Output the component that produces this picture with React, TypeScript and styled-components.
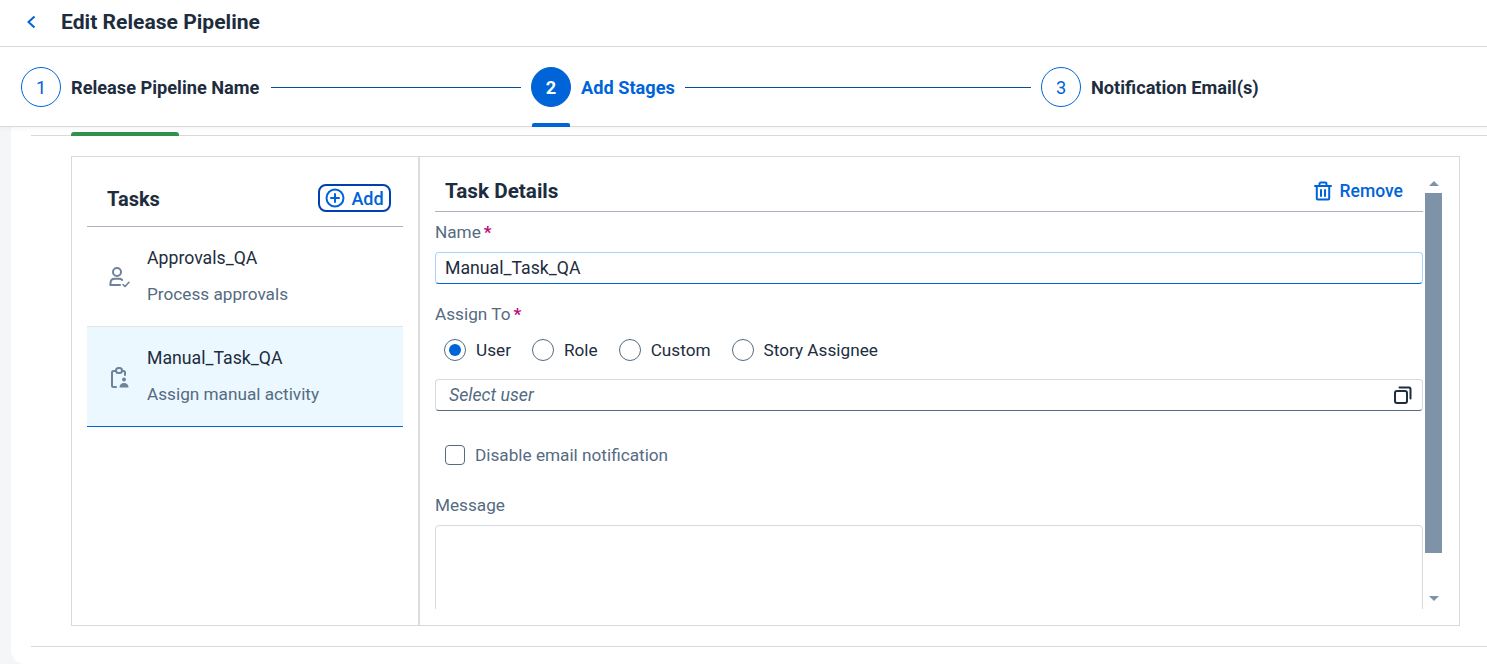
import { createGlobalStyle, styled } from 'styled-components';

const GlobalStyle = createGlobalStyle`
  html, body { margin: 0; padding: 0; height: 100%; background: #f5f6f7; overflow: hidden; }
  * { box-sizing: border-box; }
  body { font-family: Roboto, 'Liberation Sans', sans-serif; color: #1d2d3e; }
`;

const Page = styled.div`
  width: 1487px;
  height: 664px;
  display: flex;
  flex-direction: column;
  overflow: hidden;
`;

const TopBar = styled.header`
  height: 47px;
  flex: none;
  display: flex;
  align-items: center;
  gap: 23px;
  padding: 0 0 3px 25px;
  background: #fff;
  border-bottom: 1px solid #d9d9d9;
  h1 {
    margin: 0;
    font-size: 21.1px;
    line-height: 24px;
    font-weight: 700;
  }
`;

const BackIcon = styled.svg`
  width: 13px;
  height: 14px;
  fill: none;
  stroke: #0064d9;
  stroke-width: 2;
`;

const Stepper = styled.nav`
  height: 80px;
  flex: none;
  display: flex;
  align-items: flex-start;
  padding: 20px 0 0 21px;
  background: #fff;
  border-bottom: 1px solid #d9d9d9;
  box-shadow: 0 2px 5px rgba(0, 0, 0, 0.04);
  position: relative;
  z-index: 2;
`;

const Step = styled.div<{ $active?: boolean; $width: number }>`
  position: relative;
  display: flex;
  align-items: center;
  gap: 10px;
  width: ${(p) => p.$width}px;
  height: 40px;
  white-space: nowrap;
  font-size: 18.2px;
  font-weight: 700;
  color: ${(p) => (p.$active ? '#0064d9' : '#1d2d3e')};
  margin-right: 10px;
  ${(p) =>
    p.$active &&
    `&::after {
      content: '';
      position: absolute;
      left: 1px;
      top: 56px;
      width: 38px;
      height: 4px;
      background: #0064d9;
      border-radius: 2px 2px 0 0;
    }`}
`;

const StepNumber = styled.span<{ $active?: boolean }>`
  width: 40px;
  height: 40px;
  flex: none;
  border-radius: 50%;
  display: flex;
  align-items: center;
  justify-content: center;
  font-weight: ${(p) => (p.$active ? 700 : 400)};
  border: 1px solid #0064d9;
  color: ${(p) => (p.$active ? '#fff' : '#0064d9')};
  background: ${(p) => (p.$active ? '#0064d9' : '#fff')};
`;

const StepLine = styled.span<{ $width: number }>`
  width: ${(p) => p.$width}px;
  height: 1px;
  margin: 20px 10px 0 0;
  background: #0a4f9e;
`;

const Body = styled.main`
  flex: 1;
  min-height: 0;
  margin-left: 11px;
  padding: 8px 0 0 20px;
  background: #fff;
  border-bottom-left-radius: 14px;
`;

const Section = styled.section`
  height: 512px;
  padding: 20px 27px 20px 40px;
  border-top: 1px solid #d9d9d9;
  border-bottom: 1px solid #d9d9d9;
  position: relative;
`;

const GreenTab = styled.span`
  position: absolute;
  left: 40px;
  top: -4px;
  width: 108px;
  height: 4px;
  background: #30914c;
  border-radius: 3px 3px 0 0;
`;

const Panel = styled.div`
  height: 470px;
  display: grid;
  grid-template-columns: 348px 1fr;
  grid-template-rows: minmax(0, 1fr);
  border: 1px solid #d9d9d9;
`;

const TaskList = styled.div`
  padding: 0 15px;
  border-right: 2px solid #d9dee3;
`;

const TaskListHeader = styled.div`
  height: 70px;
  display: flex;
  align-items: center;
  justify-content: space-between;
  padding: 14px 12px 0 20px;
  border-bottom: 1px solid #a9b4be;
  h2 {
    margin: 0;
    font-size: 20px;
    font-weight: 700;
  }
`;

const AddButton = styled.button`
  width: 73px;
  height: 28px;
  display: flex;
  align-items: center;
  justify-content: center;
  gap: 6px;
  padding: 0;
  margin-top: -1px;
  background: #fff;
  border: 2px solid #0040b0;
  border-radius: 8px;
  color: #0064d9;
  font: inherit;
  font-size: 18px;
  font-weight: 500;
`;

const IconSvg = styled.svg<{ $size: number; $color: string; $stroke?: number }>`
  width: ${(p) => p.$size}px;
  height: ${(p) => p.$size}px;
  flex: none;
  fill: none;
  stroke: ${(p) => p.$color};
  stroke-width: ${(p) => p.$stroke ?? 1.7};
  stroke-linecap: round;
  stroke-linejoin: round;
`;

const TaskItem = styled.div<{ $selected?: boolean }>`
  height: 100px;
  display: flex;
  align-items: center;
  gap: 16px;
  padding: 0 0 0 20px;
  background: ${(p) => (p.$selected ? '#ebf8ff' : '#fff')};
  border-bottom: 1px solid ${(p) => (p.$selected ? '#0064d9' : '#e5e5e5')};
`;

const TaskText = styled.div`
  display: flex;
  flex-direction: column;
  gap: 12px;
  margin-top: -1px;
  strong {
    font-size: 17.7px;
    line-height: 24px;
    font-weight: 400;
  }
  span {
    font-size: 17.2px;
    line-height: 24px;
    color: #556b82;
  }
`;

const Details = styled.div`
  min-width: 0;
  min-height: 0;
  display: flex;
  padding: 16px 17px 16px 15px;
  gap: 2px;
`;

const DetailsScroll = styled.div`
  flex: 1;
  min-width: 0;
  overflow: hidden;
`;

const DetailsHeader = styled.div`
  height: 39px;
  display: flex;
  align-items: center;
  justify-content: space-between;
  padding: 0 20px 2px 10px;
  border-bottom: 1px solid #a9b4be;
  h2 {
    margin: 0;
    font-size: 20.7px;
    font-weight: 700;
  }
`;

const RemoveAction = styled.span`
  display: flex;
  align-items: center;
  gap: 7px;
  color: #0064d9;
  font-size: 17.5px;
  font-weight: 500;
`;

const Label = styled.div<{ $top: number }>`
  margin-top: ${(p) => p.$top}px;
  font-size: 17.2px;
  line-height: 24px;
  color: #556b82;
  i {
    font-style: normal;
    color: #c0097a;
    margin-left: 3px;
    font-weight: 700;
  }
`;

const TextField = styled.div<{ $focused?: boolean }>`
  height: 32px;
  margin-top: 8px;
  padding: 0 9px ${(p) => (p.$focused ? 0 : 1)}px;
  display: flex;
  align-items: center;
  justify-content: space-between;
  font-size: 17.7px;
  background: #fff;
  border: 1px solid ${(p) => (p.$focused ? '#a9d2fb' : '#d5dadd')};
  border-bottom: 1px solid ${(p) => (p.$focused ? '#0064d9' : '#556b82')};
  border-radius: 4px;
  em {
    color: #556b82;
    padding-left: 4px;
  }
`;

const RadioRow = styled.div`
  display: flex;
  height: 24px;
  margin: 12px 0 17px 9px;
  gap: 21px;
`;

const RadioOption = styled.label`
  display: flex;
  align-items: center;
  gap: 10px;
  font-size: 17.2px;
`;

const RadioCircle = styled.span<{ $checked?: boolean }>`
  width: 22px;
  height: 22px;
  border-radius: 50%;
  border: 1px solid #556b82;
  background: #fff;
  display: flex;
  align-items: center;
  justify-content: center;
  &::after {
    content: '';
    width: 12px;
    height: 12px;
    border-radius: 50%;
    background: ${(p) => (p.$checked ? '#0064d9' : 'transparent')};
  }
`;

const CheckRow = styled.label`
  display: flex;
  align-items: center;
  gap: 10px;
  height: 24px;
  margin: 32px 0 0 10px;
  font-size: 17.2px;
  color: #556b82;
`;

const CheckBox = styled.span`
  width: 20px;
  height: 20px;
  border: 1px solid #556b82;
  border-radius: 4px;
  background: #fff;
`;

const MessageBox = styled.div`
  height: 120px;
  margin-top: 8px;
  border: 1px solid #d5dadd;
  border-radius: 4px;
`;

const ScrollBar = styled.div`
  width: 17px;
  flex: none;
  display: flex;
  flex-direction: column;
  align-items: center;
  padding-top: 8px;
`;

const ScrollArrow = styled.span<{ $down?: boolean }>`
  width: 0;
  height: 0;
  border-left: 5px solid transparent;
  border-right: 5px solid transparent;
  ${(p) => (p.$down ? 'border-top: 5px solid #7f93a8;' : 'border-bottom: 5px solid #7f93a8;')}
`;

const ScrollThumb = styled.div`
  width: 17px;
  height: 360px;
  margin: 7px 0 43px;
  background: #7f93a8;
`;

function PersonCheckIcon() {
  return (
    <IconSvg $size={24} $color="#6e8299" $stroke={2} viewBox="0 0 24 24">
      <circle cx="10" cy="7" r="4" />
      <path d="M3.500 20v-2c0-2.400 1.800-4.200 4.500-4.200h4c1.300 0 2.400.4 3.200 1.100" />
      <path d="M3.500 20H13" />
      <path d="M16 19.500l2 2 4-4.200" strokeWidth="1.600" />
    </IconSvg>
  );
}

function ClipboardPersonIcon() {
  return (
    <IconSvg $size={24} $color="#6e8299" $stroke={2} viewBox="0 0 24 24">
      <path d="M9 6H6.500A1.500 1.500 0 0 0 5 7.500V20.500A1.500 1.500 0 0 0 6.500 22H9" />
      <path d="M15 6h1.500A1.500 1.500 0 0 1 18 7.500V10" />
      <rect x="9" y="3" width="6" height="5" rx="2.500" />
      <circle cx="17" cy="14.500" r="2" fill="#6e8299" stroke="none" />
      <path d="M12.500 22.500c0-3 1.800-4.500 4.500-4.500s4.500 1.500 4.500 4.500z" fill="#6e8299" stroke="none" />
    </IconSvg>
  );
}

export default function App() {
  return (
    <>
      <GlobalStyle />
      <Page>
        <TopBar>
          <BackIcon viewBox="0 0 13 14">
            <path d="M9.500 1.500 3.500 7l6 5.500" />
          </BackIcon>
          <h1>Edit Release Pipeline</h1>
        </TopBar>
        <Stepper>
          <Step $width={240}>
            <StepNumber>1</StepNumber>
            Release Pipeline Name
          </Step>
          <StepLine $width={250} />
          <Step $active $width={144}>
            <StepNumber $active>2</StepNumber>
            Add Stages
          </Step>
          <StepLine $width={346} />
          <Step $width={218}>
            <StepNumber>3</StepNumber>
            Notification Email(s)
          </Step>
        </Stepper>
        <Body>
          <Section>
            <GreenTab />
            <Panel>
              <TaskList>
                <TaskListHeader>
                  <h2>Tasks</h2>
                  <AddButton>
                    <IconSvg $size={20} $color="#0064d9" $stroke={2} viewBox="0 0 20 20">
                      <circle cx="10" cy="10" r="8.500" />
                      <path d="M10 6v8M6 10h8" />
                    </IconSvg>
                    Add
                  </AddButton>
                </TaskListHeader>
                <TaskItem>
                  <PersonCheckIcon />
                  <TaskText>
                    <strong>Approvals_QA</strong>
                    <span>Process approvals</span>
                  </TaskText>
                </TaskItem>
                <TaskItem $selected>
                  <ClipboardPersonIcon />
                  <TaskText>
                    <strong>Manual_Task_QA</strong>
                    <span>Assign manual activity</span>
                  </TaskText>
                </TaskItem>
              </TaskList>
              <Details>
                <DetailsScroll>
                  <DetailsHeader>
                    <h2>Task Details</h2>
                    <RemoveAction>
                      <IconSvg $size={20} $color="#0064d9" $stroke={2} viewBox="0 0 20 20">
                        <path d="M2 5h16M6.500 5V2.800A1.300 1.300 0 0 1 7.800 1.500h4.400a1.300 1.300 0 0 1 1.300 1.300V5M3.800 5v12.500a1 1 0 0 0 1 1h10.400a1 1 0 0 0 1-1V5M8 9v6M12 9v6" />
                      </IconSvg>
                      Remove
                    </RemoveAction>
                  </DetailsHeader>
                  <Label $top={8}>
                    Name<i>*</i>
                  </Label>
                  <TextField $focused>Manual_Task_QA</TextField>
                  <Label $top={18}>
                    Assign To<i>*</i>
                  </Label>
                  <RadioRow>
                    <RadioOption>
                      <RadioCircle $checked />
                      User
                    </RadioOption>
                    <RadioOption>
                      <RadioCircle />
                      Role
                    </RadioOption>
                    <RadioOption>
                      <RadioCircle />
                      Custom
                    </RadioOption>
                    <RadioOption>
                      <RadioCircle />
                      Story Assignee
                    </RadioOption>
                  </RadioRow>
                  <TextField>
                    <em>Select user</em>
                    <IconSvg $size={20} $color="#1d2d3e" $stroke={2} viewBox="0 0 20 20">
                      <rect x="2" y="6" width="12" height="12" rx="2" />
                      <path d="M6.500 2.500H16a1.500 1.500 0 0 1 1.500 1.500v9.500" />
                    </IconSvg>
                  </TextField>
                  <CheckRow>
                    <CheckBox />
                    Disable email notification
                  </CheckRow>
                  <Label $top={26}>Message</Label>
                  <MessageBox />
                </DetailsScroll>
                <ScrollBar>
                  <ScrollArrow />
                  <ScrollThumb />
                  <ScrollArrow $down />
                </ScrollBar>
              </Details>
            </Panel>
          </Section>
        </Body>
      </Page>
    </>
  );
}
